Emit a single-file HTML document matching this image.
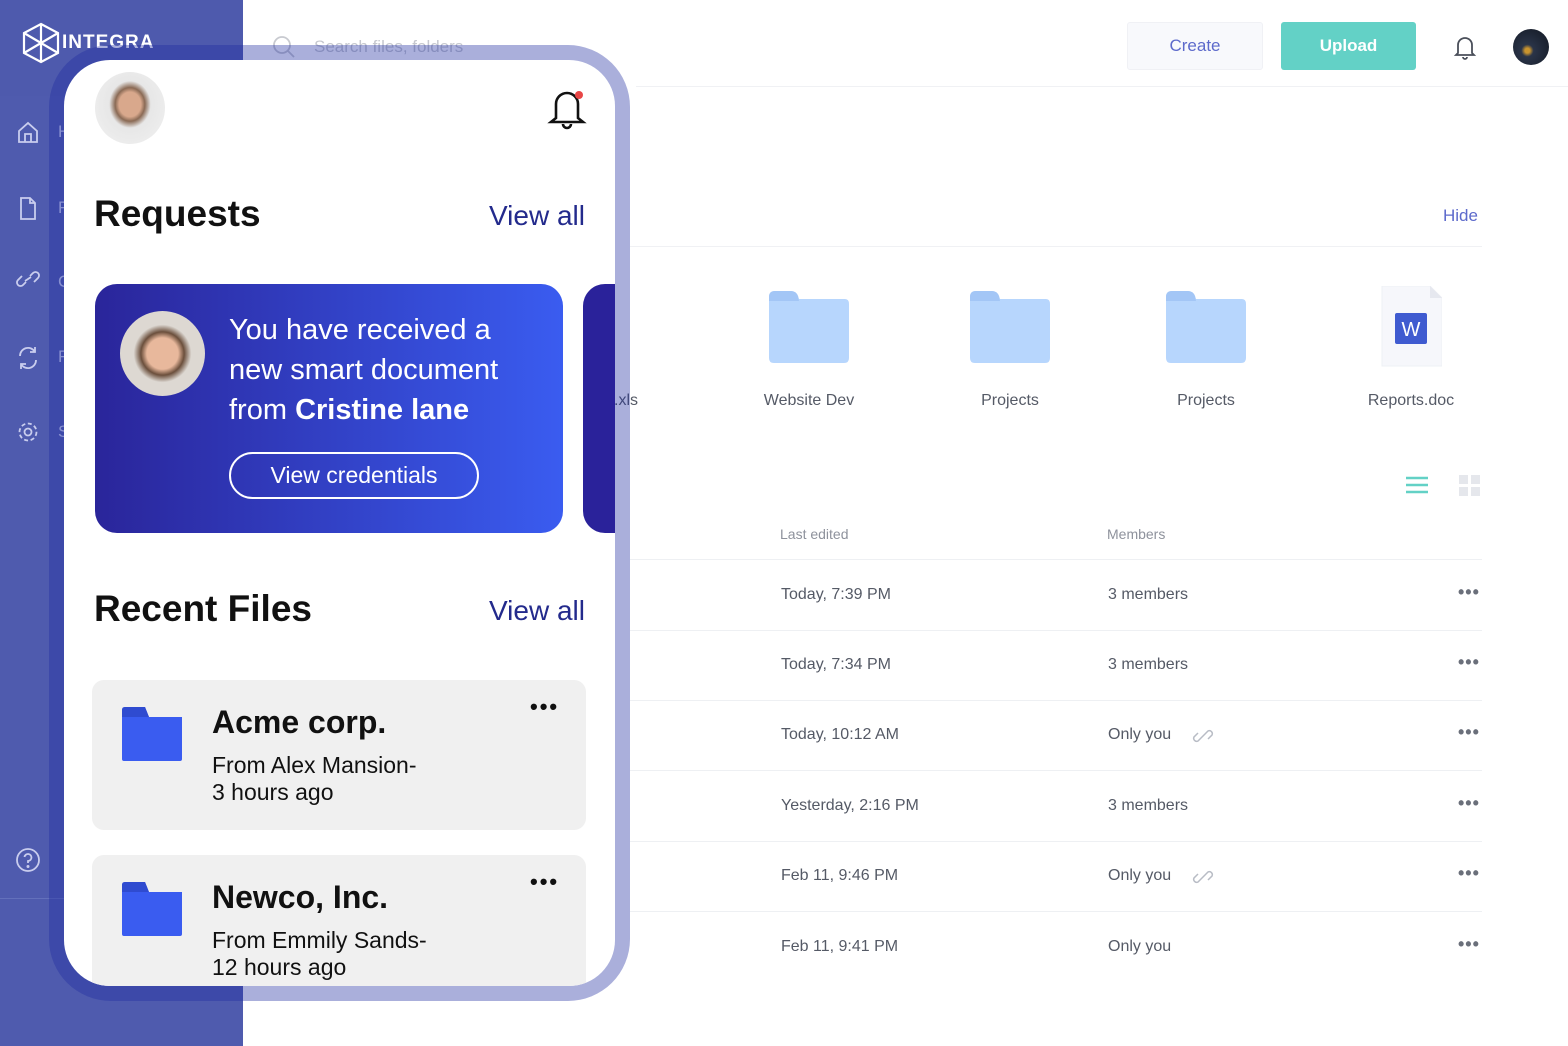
<!DOCTYPE html>
<html><head><meta charset="utf-8"><style>
*{margin:0;padding:0;box-sizing:border-box}
body{width:1568px;height:1046px;position:relative;overflow:hidden;background:#fff;font-family:"Liberation Sans",sans-serif}
.abs{position:absolute}
.side{left:0;top:0;width:243px;height:1046px;background:#4f5bae}
.sidetop{left:0;top:0;width:243px;height:96px;background:#4e5aad}
.row{left:630px;width:852px;height:1px;background:#eef0f3}
.cell{font-size:16px;color:#555a66}
.dots{font-size:18px;color:#6a6f7a;letter-spacing:1px;font-weight:bold}
.flabel{font-size:16px;color:#555a66;text-align:center;width:160px}
.lbl{font-size:17px;color:#c9cdee}
</style></head><body>
<div class="abs side"></div>
<div class="abs sidetop"></div>
<div class="abs" style="left:0;top:898px;width:243px;height:1px;background:#6370bb"></div>
<svg class="abs" style="left:21px;top:22px" width="40" height="42" viewBox="0 0 40 42" fill="none" stroke="#fff" stroke-width="2.2"><path d="M20 2 L37 11 L37 31 L20 40 L3 31 L3 11 Z M3 11 L37 31 M37 11 L3 31 M20 2 L20 21 M20 21 L20 40"/></svg>
<div class="abs" style="left:62px;top:32px;color:#fff;font-size:19px;font-weight:bold;letter-spacing:1px">INTEGRA</div>
<div class="abs lbl" style="left:58px;top:122px">H</div>
<div class="abs lbl" style="left:58px;top:198px">F</div>
<div class="abs lbl" style="left:58px;top:272px">C</div>
<div class="abs lbl" style="left:58px;top:347px">R</div>
<div class="abs lbl" style="left:58px;top:422px">S</div>
<svg class="abs" style="left:16px;top:120px" width="24" height="340" viewBox="0 0 24 340" fill="none" stroke="#c9cdee" stroke-width="1.8">
<path d="M3 11 L12 3 L21 11 V22 H3 Z M9 22 V14 H15 V22"/>
<path d="M5 78 H14 L19 83 V99 H5 Z M14 78 V83 H19"/>
<path d="M10 162 L7 165 A3.5 3.5 0 0 1 2 160 L6 156 M14 156 L17 153 A3.5 3.5 0 0 1 22 158 L18 162 M9 161 L15 157"/>
<path d="M4 236 A8 8 0 0 1 19 232 M20 240 A8 8 0 0 1 5 244 M19 227 V232 H14 M5 249 V244 H10"/>
<circle cx="12" cy="312" r="3.5"/><circle cx="12" cy="312" r="8.5" stroke-dasharray="4 2.6"/>
</svg>
<svg class="abs" style="left:15px;top:847px" width="26" height="26" viewBox="0 0 26 26" fill="none" stroke="#c9cdee" stroke-width="1.8"><circle cx="13" cy="13" r="11"/><path d="M9.5 10 A3.5 3.5 0 1 1 13 14 V16"/><circle cx="13" cy="19.5" r=".6" fill="#c9cdee"/></svg>
<svg class="abs" style="left:272px;top:35px" width="24" height="24" fill="none" stroke="#c8cad0" stroke-width="1.8"><circle cx="10" cy="10" r="8"/><path d="M16 16 L22 22"/></svg>
<div class="abs" style="left:314px;top:37px;font-size:17px;color:#c6c8cf">Search files, folders</div>
<div class="abs" style="left:636px;top:86px;width:932px;height:1px;background:#f0f1f4"></div>
<div class="abs" style="left:1127px;top:22px;width:136px;height:48px;background:#f8f9fc;border:1px solid #f0f1f5;border-radius:3px;color:#5d6acb;font-size:17px;text-align:center;line-height:46px">Create</div>
<div class="abs" style="left:1281px;top:22px;width:135px;height:48px;background:#63d1c6;border-radius:3px;color:#fff;font-size:17px;font-weight:bold;text-align:center;line-height:48px">Upload</div>
<svg class="abs" style="left:1452px;top:33px" width="26" height="28" fill="none" stroke="#4a4f5a" stroke-width="1.8"><path d="M6 20 V12 A7 7 0 0 1 20 12 V20 L22 22 H4 Z M11 24 A2 2 0 0 0 15 24"/></svg>
<div class="abs" style="left:1513px;top:29px;width:36px;height:36px;border-radius:50%;background:radial-gradient(circle at 40% 60%,#c9942e 0 8%,#2a3448 20%,#1b2230 70%)"></div>
<div class="abs" style="left:1443px;top:206px;font-size:17px;color:#5d6acb">Hide</div>
<div class="abs" style="left:630px;top:246px;width:852px;height:1px;background:#f0f1f4"></div>
<svg class="abs" style="left:769px;top:291px" width="80" height="72"><path d="M0 6 Q0 0 6 0 H22 Q27 0 29 5 L30 8 H76 Q80 8 80 13 V67 Q80 72 75 72 H5 Q0 72 0 67 Z" fill="#b7d6fd"/><path d="M0 6 Q0 0 6 0 H22 Q27 0 29 5 L30 10 H0Z" fill="#a3c6f6"/></svg>
<svg class="abs" style="left:970px;top:291px" width="80" height="72"><path d="M0 6 Q0 0 6 0 H22 Q27 0 29 5 L30 8 H76 Q80 8 80 13 V67 Q80 72 75 72 H5 Q0 72 0 67 Z" fill="#b7d6fd"/><path d="M0 6 Q0 0 6 0 H22 Q27 0 29 5 L30 10 H0Z" fill="#a3c6f6"/></svg>
<svg class="abs" style="left:1166px;top:291px" width="80" height="72"><path d="M0 6 Q0 0 6 0 H22 Q27 0 29 5 L30 8 H76 Q80 8 80 13 V67 Q80 72 75 72 H5 Q0 72 0 67 Z" fill="#b7d6fd"/><path d="M0 6 Q0 0 6 0 H22 Q27 0 29 5 L30 10 H0Z" fill="#a3c6f6"/></svg>
<svg class="abs" style="left:1380px;top:286px" width="62" height="82"><path d="M2 0 H50 L62 12 V80 H2 Z" fill="#f6f7fb" stroke="#eef0f5"/><path d="M50 0 V12 H62Z" fill="#e6e8ef"/><rect x="15" y="27" width="32" height="31" rx="2" fill="#3f5bd0"/><text x="31" y="50" font-family="Liberation Sans" font-size="20" fill="#fff" text-anchor="middle">W</text></svg>
<div class="abs flabel" style="left:729px;top:392px">Website Dev</div>
<div class="abs flabel" style="left:930px;top:392px">Projects</div>
<div class="abs flabel" style="left:1126px;top:392px">Projects</div>
<div class="abs flabel" style="left:1331px;top:392px">Reports.doc</div>
<div class="abs" style="left:614px;top:392px;font-size:16px;color:#555a66">.xls</div>
<svg class="abs" style="left:1405px;top:475px" width="24" height="20" stroke="#63d1c6" stroke-width="2.4"><path d="M1 3H23M1 10H23M1 17H23"/></svg>
<svg class="abs" style="left:1459px;top:475px" width="21" height="21" fill="#e5e7ec"><rect width="9" height="9"/><rect x="12" width="9" height="9"/><rect y="12" width="9" height="9"/><rect x="12" y="12" width="9" height="9"/></svg>
<div class="abs" style="left:780px;top:526px;font-size:14px;color:#8e929c">Last edited</div>
<div class="abs" style="left:1107px;top:526px;font-size:14px;color:#8e929c">Members</div>
<div class="abs row" style="top:559px"></div>
<div class="abs row" style="top:630px"></div>
<div class="abs row" style="top:700px"></div>
<div class="abs row" style="top:770px"></div>
<div class="abs row" style="top:841px"></div>
<div class="abs row" style="top:911px"></div>
<div class="abs cell" style="left:781px;top:586px">Today, 7:39 PM</div><div class="abs cell" style="left:1108px;top:586px">3 members</div><div class="abs dots" style="left:1458px;top:582px">•••</div>
<div class="abs cell" style="left:781px;top:656px">Today, 7:34 PM</div><div class="abs cell" style="left:1108px;top:656px">3 members</div><div class="abs dots" style="left:1458px;top:652px">•••</div>
<div class="abs cell" style="left:781px;top:726px">Today, 10:12 AM</div><div class="abs cell" style="left:1108px;top:726px">Only you</div><div class="abs dots" style="left:1458px;top:722px">•••</div>
<div class="abs cell" style="left:781px;top:797px">Yesterday, 2:16 PM</div><div class="abs cell" style="left:1108px;top:797px">3 members</div><div class="abs dots" style="left:1458px;top:793px">•••</div>
<div class="abs cell" style="left:781px;top:867px">Feb 11, 9:46 PM</div><div class="abs cell" style="left:1108px;top:867px">Only you</div><div class="abs dots" style="left:1458px;top:863px">•••</div>
<div class="abs cell" style="left:781px;top:938px">Feb 11, 9:41 PM</div><div class="abs cell" style="left:1108px;top:938px">Only you</div><div class="abs dots" style="left:1458px;top:934px">•••</div>
<svg class="abs" style="left:1192px;top:725px" width="22" height="22" fill="none" stroke="#b8bcc5" stroke-width="1.5"><path d="M9 13 L6 16 A3 3 0 0 1 2 12 L6 8 M13 9 L16 6 A3 3 0 0 1 20 10 L16 14 M8 14 L14 8"/></svg>
<svg class="abs" style="left:1192px;top:866px" width="22" height="22" fill="none" stroke="#b8bcc5" stroke-width="1.5"><path d="M9 13 L6 16 A3 3 0 0 1 2 12 L6 8 M13 9 L16 6 A3 3 0 0 1 20 10 L16 14 M8 14 L14 8"/></svg>
<div class="abs" style="left:49px;top:45px;width:581px;height:956px;border-radius:62px;background:rgba(31,44,160,0.38)"></div>
<div class="abs" style="left:64px;top:60px;width:551px;height:926px;border-radius:46px;background:#fff;overflow:hidden">
 <div class="abs" style="left:31px;top:12px;width:70px;height:72px;border-radius:50%;background:radial-gradient(ellipse at 50% 45%,#d9a88c 0 22%,#8a6a55 30%,#e7e7e7 42%,#ececec 70%)"></div>
 <svg class="abs" style="left:483px;top:26px" width="42" height="44" fill="none" stroke="#111" stroke-width="2.6"><path d="M9 32 V18 A11 11 0 0 1 31 18 V32 L36 36 H4 Z M16 38 A4 4 0 0 0 24 38"/><circle cx="32" cy="9" r="4" fill="#e84646" stroke="none"/></svg>
 <div class="abs" style="left:30px;top:133px;font-size:37px;font-weight:bold;color:#111">Requests</div>
 <div class="abs" style="left:425px;top:140px;font-size:28px;color:#232a8c">View all</div>
 <div class="abs" style="left:31px;top:224px;width:468px;height:249px;border-radius:22px;background:linear-gradient(90deg,#2a259a,#3a5cf0)">
  <div class="abs" style="left:25px;top:27px;width:85px;height:85px;border-radius:50%;background:radial-gradient(ellipse at 50% 50%,#e8b89c 0 26%,#6b4f3c 36%,#ddd8d2 48%)"></div>
  <div class="abs" style="left:134px;top:26px;font-size:29px;line-height:40px;color:#fff">You have received a<br>new smart document<br>from <b>Cristine lane</b></div>
  <div class="abs" style="left:134px;top:168px;width:250px;height:47px;border:2px solid #fff;border-radius:24px;color:#fff;font-size:23px;text-align:center;line-height:43px">View credentials</div>
 </div>
 <div class="abs" style="left:519px;top:224px;width:80px;height:249px;border-radius:22px;background:#2a229a"></div>
 <div class="abs" style="left:30px;top:528px;font-size:37px;font-weight:bold;color:#111">Recent Files</div>
 <div class="abs" style="left:425px;top:535px;font-size:28px;color:#232a8c">View all</div>
 <div class="abs" style="left:28px;top:620px;width:494px;height:150px;border-radius:12px;background:#f0f0f0">
  <svg class="abs" style="left:30px;top:27px" width="60" height="54"><path d="M0 3 Q0 0 3 0 H23 L27 10 H60 V52 Q60 54 58 54 H2 Q0 54 0 52Z" fill="#3a5cf0"/><path d="M0 3 Q0 0 3 0 H23 L27 10 H0Z" fill="#2f4bd0"/></svg>
  <div class="abs" style="left:120px;top:24px;font-size:32px;font-weight:bold;color:#111">Acme corp.</div>
  <div class="abs" style="left:120px;top:72px;font-size:23px;line-height:27px;color:#111">From Alex Mansion-<br>3 hours ago</div>
  <div class="abs" style="left:438px;top:14px;font-size:22px;font-weight:bold;color:#111;letter-spacing:2px">•••</div>
 </div>
 <div class="abs" style="left:28px;top:795px;width:494px;height:150px;border-radius:12px;background:#f0f0f0">
  <svg class="abs" style="left:30px;top:27px" width="60" height="54"><path d="M0 3 Q0 0 3 0 H23 L27 10 H60 V52 Q60 54 58 54 H2 Q0 54 0 52Z" fill="#3a5cf0"/><path d="M0 3 Q0 0 3 0 H23 L27 10 H0Z" fill="#2f4bd0"/></svg>
  <div class="abs" style="left:120px;top:24px;font-size:32px;font-weight:bold;color:#111">Newco, Inc.</div>
  <div class="abs" style="left:120px;top:72px;font-size:23px;line-height:27px;color:#111">From Emmily Sands-<br>12 hours ago</div>
  <div class="abs" style="left:438px;top:14px;font-size:22px;font-weight:bold;color:#111;letter-spacing:2px">•••</div>
 </div>
</div>
</body></html>
